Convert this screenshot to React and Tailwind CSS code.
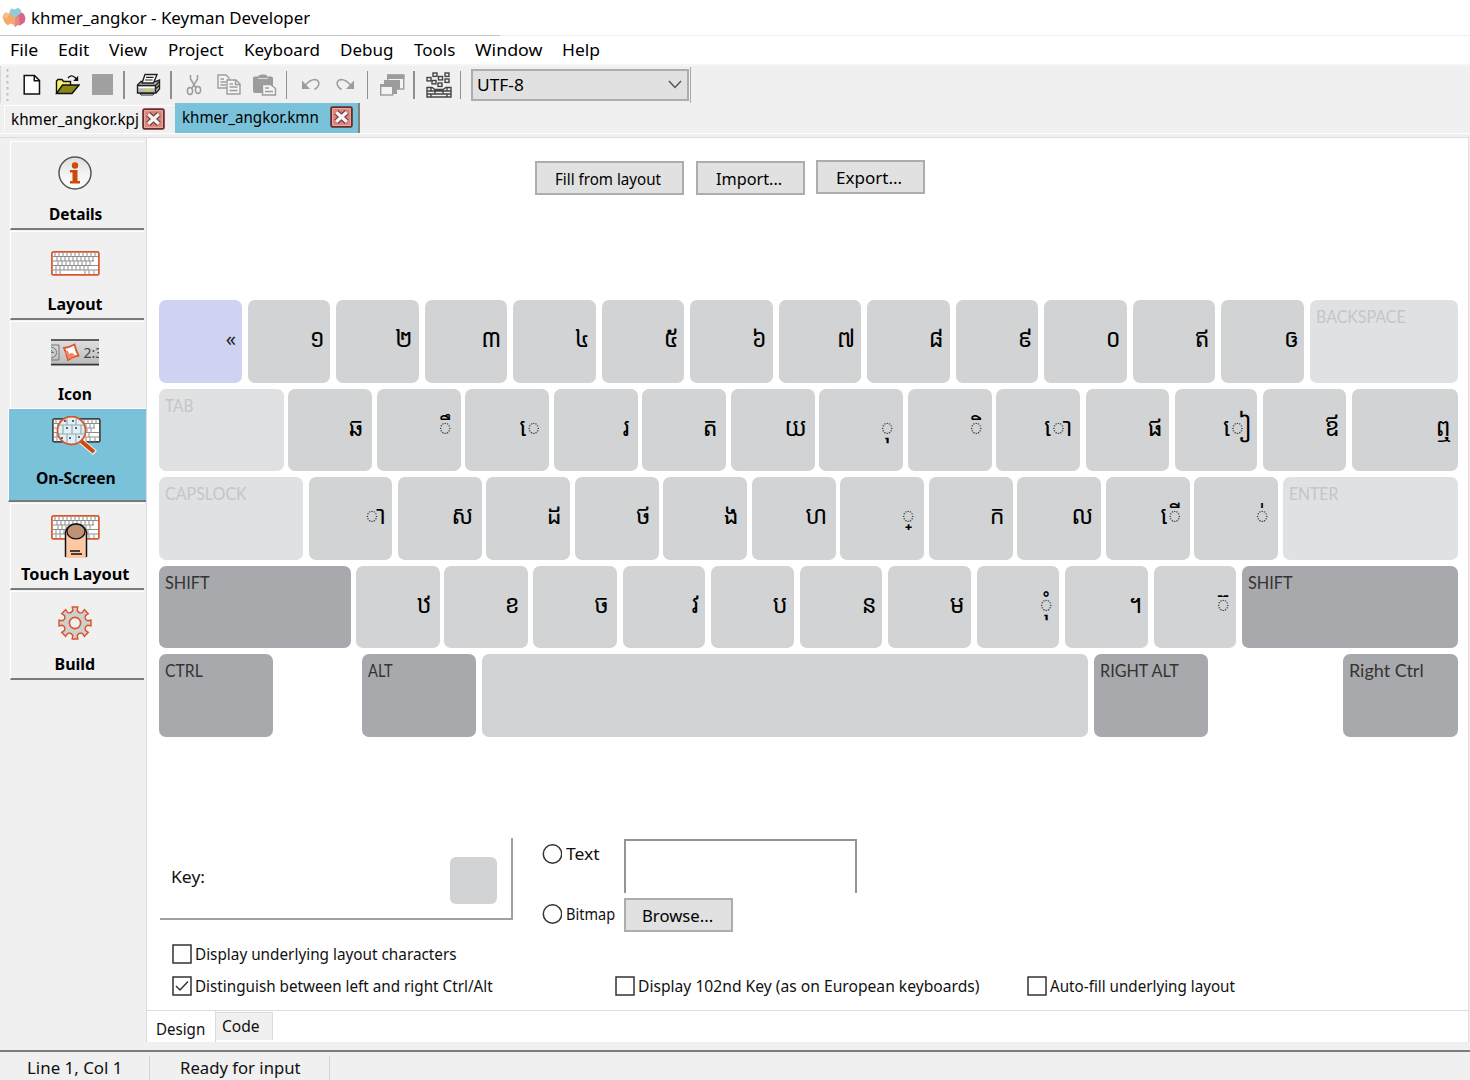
import { useLayoutEffect, useRef, useState } from "react";

/* Text squeezed or stretched horizontally to an exact width. */
function Fit({ w, className = "", children }) {
  const ref = useRef(null);
  const [scale, setScale] = useState(1);
  useLayoutEffect(() => {
    setScale(w / ref.current.offsetWidth);
  }, [w]);
  return (
    <span className="block shrink-0" style={{ width: w }}>
      <span
        ref={ref}
        className={"inline-block origin-left whitespace-nowrap " + className}
        style={{ transform: `scaleX(${scale})` }}
      >
        {children}
      </span>
    </span>
  );
}

const menus = [
  ["File", 28, 0],
  ["Edit", 31, 20],
  ["View", 38, 20],
  ["Project", 56, 21],
  ["Keyboard", 76, 20],
  ["Debug", 53, 20],
  ["Tools", 41, 21],
  ["Window", 67, 20],
  ["Help", 38, 20],
];

function Logo() {
  return (
    <svg className="block" width="26" height="22" viewBox="0 0 26 22">
      <path d="M7.500 5 L9 1.500 L13 2.500 L16 0.800 L19 3 L19.500 7 L13 11 L8 8.500Z" fill="#8fcbd9" />
      <path d="M0.500 10 L3 5.500 L8 6.500 L13 11 L12.500 18 L8 16.500 L6 18.500 L2.500 15.500Z" fill="#f6a869" />
      <path d="M13 11 L19.500 5.500 L22 7 L23.500 11 L22.500 15.500 L18 18.500 L15 17.500 L12.500 20Z" fill="#d9668a" />
      <path d="M13 11 L17 8.500 L17.500 17.500 L12.500 20Z" fill="#e98a78" />
      <path d="M0.500 10 L3 5.500 L7.500 7 L5 11.500Z" fill="#f3c08a" />
    </svg>
  );
}

function CloseBox() {
  return (
    <svg className="block shrink-0" width="23" height="22" viewBox="0 0 24 23">
      <rect x="1.2" y="1.2" width="21.6" height="20.6" rx="1.5" fill="#d98379" stroke="#6b2a2c" strokeWidth="2" />
      <rect x="2.8" y="2.8" width="18.4" height="17.4" fill="none" stroke="#e8b5ad" strokeWidth="1" />
      <path d="M6.500 6.500 L17.500 16.500 M17.500 6.500 L6.500 16.500" stroke="#7a3a3c" strokeWidth="6" />
      <path d="M6.500 6.500 L17.500 16.500 M17.500 6.500 L6.500 16.500" stroke="#f4f4f4" strokeWidth="3.400" />
    </svg>
  );
}

function NewIcon() {
  return (
    <svg className="block" width="20" height="22" viewBox="0 0 20 22">
      <path d="M2.2 1.5 H12.5 L17.5 6.5 V20 H2.2Z" fill="#fff" stroke="#111" strokeWidth="1.5" />
      <path d="M12.3 1.5 V6.8 H17.5" fill="none" stroke="#111" strokeWidth="1.5" />
    </svg>
  );
}
function OpenIcon() {
  return (
    <svg className="block" width="25" height="22" viewBox="0 0 25 22">
      <path d="M1.500 19 V7 L3 5.500 H7 L8.500 7.500 H15.500 V11" fill="#f7f46a" stroke="#111" strokeWidth="1.4" />
      <path d="M1.500 19.500 L7.500 11 H24 L17 19.500Z" fill="#8a8718" stroke="#111" strokeWidth="1.4" />
      <path d="M13 4 Q16 0 20 3.500 L22 5.500" fill="none" stroke="#111" strokeWidth="1.4" />
      <path d="M23.200 1.800 V7 H18.200Z" fill="#111" />
    </svg>
  );
}
function PrintIcon() {
  return (
    <svg className="block" width="25" height="23" viewBox="0 0 25 23">
      <path d="M1.5 12 L5 8.5 H20 L23.5 7 V16 L20 20 H1.5Z" fill="#b9b9b4" stroke="#222" strokeWidth="1.4" />
      <path d="M6 10 L9 1.5 H21 L17.5 10Z" fill="#fff" stroke="#222" strokeWidth="1.4" />
      <path d="M10 4.3 H17.5 M9 7 H16.5" stroke="#222" strokeWidth="1.2" />
      <path d="M1.5 12.5 H19.5 V20 M19.5 12.5 L23.5 8.5 M19.5 16 L23 12.5" fill="none" stroke="#222" strokeWidth="1.4" />
      <path d="M2.5 14.5 H18.5" stroke="#fff" strokeWidth="1.5" />
      <path d="M10 17 H15" stroke="#d9d432" strokeWidth="2" />
      <path d="M4 20.5 H18 L17 22 H5Z" fill="#fff" stroke="#222" strokeWidth="1" />
    </svg>
  );
}
function CutIcon() {
  return (
    <svg className="block" width="16" height="22" viewBox="0 0 16 22" fill="none" stroke="#9c9c9c" strokeWidth="1.500">
      <path d="M4.500 1 V5 L10 14 M11.500 1 V5 L6 14" />
      <ellipse cx="4" cy="17" rx="2.6" ry="3.4" />
      <ellipse cx="12" cy="16" rx="2.6" ry="3.4" />
    </svg>
  );
}
function CopyIcon() {
  return (
    <svg className="block" width="24" height="21" viewBox="0 0 24 21" fill="#f4f4f4" stroke="#9c9c9c" strokeWidth="1.4">
      <path d="M1 1 H9 L12 4 V14 H1Z" />
      <path d="M3.5 5 H7 M3.5 8 H9 M3.5 11 H9" />
      <path d="M10 6 H19 L23 10 V20 H10Z" />
      <path d="M18.5 6 V10.5 H23 M12.5 10 H16 M12.5 13 H20.5 M12.5 16.5 H20.5" fill="none" />
    </svg>
  );
}
function PasteIcon() {
  return (
    <svg className="block" width="25" height="22" viewBox="0 0 25 22">
      <path d="M1 4 Q1 2.5 2.5 2.5 H6 Q7.5 0 11 0.5 Q14.500 0 15.500 2.500 H19 Q21 2.500 21 4 V18 Q21 19 19 19 H3 Q1 19 1 17Z" fill="#9c9c9c" />
      <path d="M6 4.500 H16" stroke="#d8d8d8" strokeWidth="1.200" />
      <path d="M10.500 10.500 H18.500 L23.500 14.500 V21 H10.500Z" fill="#f4f4f4" stroke="#9c9c9c" strokeWidth="1.400" />
      <path d="M13 14 H17 M13 17.500 H21" stroke="#9c9c9c" strokeWidth="1.400" />
    </svg>
  );
}
function UndoIcon({ flip }) {
  return (
    <svg className={flip ? "block -scale-x-100" : "block"} width="20" height="14" viewBox="0 0 20 14">
      <path d="M1 2.500 V11 H9Z" fill="#9c9c9c" />
      <path d="M4 7.500 Q9 1.500 14 1.500 Q18.500 2.500 17.800 6.500 Q17 9.500 13.500 11.500" fill="none" stroke="#9c9c9c" strokeWidth="1.500" />
    </svg>
  );
}
function WindowsIcon() {
  return (
    <svg className="block" width="25" height="22" viewBox="0 0 25 22">
      <rect x="7.700" y="1" width="16" height="14" fill="#f4f4f4" stroke="#9c9c9c" strokeWidth="1.400" />
      <path d="M7 0.500 H24.500 V5 H7Z M4 6 H20 V15 H4Z" fill="#9c9c9c" />
      <rect x="0.700" y="11" width="12" height="10" fill="#f4f4f4" stroke="#9c9c9c" strokeWidth="1.400" />
      <path d="M0 10 H13 V13 H0Z M13 15 H17 V20 H13Z" fill="#9c9c9c" />
    </svg>
  );
}
function KeysIcon() {
  const loose = [[7, 1], [19, 1], [1, 5.500], [12.500, 4.500], [6, 8.500], [19, 7], [12, 11]];
  return (
    <svg className="block" width="26" height="26" viewBox="0 0 26 26" fill="none" stroke="#444" strokeWidth="1.400">
      {loose.map(([x, y]) => (
        <rect key={x + "-" + y} x={x} y={y} width="4" height="3.400" />
      ))}
      <path d="M1 15.500 H6 L9 17.500 H17 L20 15.500 H25 V25 H1Z M1 19 H25 M1 22 H25" />
      <path d="M5 15.500 V19 M9 18 V22 M13 17.500 V19 M17 19 V22 M21 15.500 V19 M5 22 V25 M21 22 V25" />
    </svg>
  );
}

function Divider() {
  return <div className="h-[28px] w-[1.500px] shrink-0 bg-[#8f8f8f]" />;
}

function Toolbar() {
  return (
    <div className="flex h-[37px] items-center border-l border-[#d8d8d8]">
      <svg className="ml-[5px] block" width="4" height="32" viewBox="0 0 4 32">
        {[1, 7, 13, 19, 25, 31].map((y) => (
          <rect key={y} x="0.500" y={y - 1} width="2" height="2.500" fill="#bdbdbd" />
        ))}
      </svg>
      <div className="ml-[12px]"><NewIcon /></div>
      <div className="ml-[13px]"><OpenIcon /></div>
      <div className="ml-[12px] h-[21px] w-[21px] bg-[#a0a0a0]" />
      <div className="ml-[10px]"><Divider /></div>
      <div className="ml-[11.500px]"><PrintIcon /></div>
      <div className="ml-[9px]"><Divider /></div>
      <div className="ml-[14.500px]"><CutIcon /></div>
      <div className="ml-[15px]"><CopyIcon /></div>
      <div className="ml-[10.500px]"><PasteIcon /></div>
      <div className="ml-[9px]"><Divider /></div>
      <div className="ml-[14px]"><UndoIcon /></div>
      <div className="ml-[14px]"><UndoIcon flip /></div>
      <div className="ml-[11.500px]"><Divider /></div>
      <div className="ml-[11.500px]"><WindowsIcon /></div>
      <div className="ml-[8.500px]"><Divider /></div>
      <div className="ml-[11px]"><KeysIcon /></div>
      <div className="ml-[8px]"><Divider /></div>
      <div className="ml-[10px] flex h-[32px] w-[218px] items-center justify-between border-2 border-[#adadad] bg-[#e1e1e1] pl-[4px] pr-[5px]">
        <Fit w={47} className="text-[17px] text-black">UTF-8</Fit>
        <svg width="14" height="9" viewBox="0 0 14 9" fill="none" stroke="#555" strokeWidth="1.500">
          <path d="M1 1 L7 7.500 L13 1" />
        </svg>
      </div>
      <div className="ml-px h-[36px] w-px bg-[#a8a8a8]" />
    </div>
  );
}

function KeyboardArt({ color = "#d8552b" }) {
  const rows = [
    [4, 8, 12, 16, 20, 24, 28, 32, 36, 40, 44],
    [6, 10, 14, 18, 22, 26, 30, 34, 38, 42],
    [7, 11, 15, 19, 23, 27, 31, 35, 39],
    [5, 9, 13, 17, 21, 25, 29, 33, 37],
    [5, 9, 34, 38, 43],
  ];
  return (
    <g>
      <rect x="0.900" y="0.900" width="47" height="23" rx="1.500" fill="#fff" stroke={color} strokeWidth="1.700" />
      <path d="M2 5.500 H47 M2 10 H43 M2 14.500 H47 M2 19 H47" stroke="#8c8c8c" strokeWidth="1" />
      {rows.map((xs, r) => (
        <path key={r} d={xs.map((x) => `M${x} ${1.500 + r * 4.500} v4`).join(" ")} stroke="#8c8c8c" strokeWidth="1" />
      ))}
    </g>
  );
}

function DetailsArt() {
  return (
    <svg className="block" width="36" height="36" viewBox="0 0 36 36">
      <defs>
        <linearGradient id="disc" x1="0" y1="0" x2="0" y2="1">
          <stop offset="0" stopColor="#dedede" />
          <stop offset="0.500" stopColor="#f2f2f2" />
          <stop offset="1" stopColor="#fff" />
        </linearGradient>
      </defs>
      <circle cx="18" cy="18" r="16" fill="url(#disc)" stroke="#555" strokeWidth="1.500" />
      <circle cx="18" cy="10.500" r="3.200" fill="#cc4a0c" />
      <path d="M13 15 H20.500 V26 H23 V28.500 H13 V26 H15.500 V17.500 H13Z" fill="#cc4a0c" />
    </svg>
  );
}
function LayoutArt() {
  return <svg className="block" width="49" height="25" viewBox="0 0 49 25"><KeyboardArt /></svg>;
}
function TrayArt() {
  return (
    <svg className="block" width="48" height="27" viewBox="0 0 48 27">
      <defs>
        <linearGradient id="tray" x1="0" y1="0" x2="0" y2="1">
          <stop offset="0" stopColor="#e0e0e0" />
          <stop offset="1" stopColor="#b9b9b9" />
        </linearGradient>
      </defs>
      <rect width="48" height="27" fill="url(#tray)" />
      <path d="M0 1 H48 M0 25.500 H48" stroke="#333" strokeWidth="1.500" />
      <path d="M0 6 H8 V21 H0" fill="none" stroke="#777" />
      <path d="M0 8 Q5.500 9 5.500 13.500 Q5.500 18 0 19 M0 13.500 H3 M0 11 L2 13" fill="none" stroke="#777" />
      <path d="M13 9 Q18 8.500 23.500 5.500 Q25 12 27.500 16.500 Q22 17.500 17 21 Q15.500 14 13 9Z" fill="#fff" stroke="#e0562b" strokeWidth="1.800" />
      <path d="M14.500 13 Q17 9 18 15 Q22 12 24 17 L18 20Z" fill="#ee8a66" />
      <text x="32.500" y="18.500" className="font-['Noto_Sans'] text-[14px]" fill="#444">2:3</text>
    </svg>
  );
}
function OnScreenArt() {
  return (
    <svg className="block" width="49" height="40" viewBox="0 0 49 40">
      <g transform="translate(0 2)"><KeyboardArt color="#444" /></g>
      <path d="M29 25 L43 37" stroke="#eee" strokeWidth="6" />
      <path d="M29 25 L42 36" stroke="#cc4a0c" strokeWidth="4" />
      <circle cx="19.500" cy="14.500" r="14" fill="#dff1f7" stroke="#d8552b" strokeWidth="1.800" />
      <path d="M7 9 H32 M6 18 H33 M15 3 V9 M24 3 V9 M11 9 V18 M20 9 V18 M29 9 V18 M15 18 V27 M24 18 V27" stroke="#9aa" strokeWidth="1.200" fill="none" />
      <path d="M13 6 v-2 M21 6 v-2 M15 13 v-2 M24 13 v-2 M10 23 v-2 M18 23 v-2 M27 22 v-2" stroke="#334" strokeWidth="1.500" />
    </svg>
  );
}
function TouchArt() {
  return (
    <svg className="block" width="49" height="43" viewBox="0 0 49 43">
      <KeyboardArt />
      <path d="M14.500 43 V17 Q17 9 25 9 Q33 9 35.500 17 V43Z" fill="#fcc9a4" />
      <path d="M14.500 42 V17 Q17 9 25 9 Q33 9 35.500 17 V42" fill="none" stroke="#111" strokeWidth="1.500" />
      <ellipse cx="25" cy="16.500" rx="9" ry="7.300" fill="#bd9275" stroke="#111" strokeWidth="1.300" />
      <path d="M19 36 H29 M20 39 H31" stroke="#111" strokeWidth="1.400" />
    </svg>
  );
}
function BuildArt() {
  const teeth = [0, 45, 90, 135, 180, 225, 270, 315];
  return (
    <svg className="block" width="36" height="36" viewBox="-18 -18 36 36">
      <circle r="11.200" fill="#cfcfcf" stroke="#d8552b" strokeWidth="1.400" />
      <g fill="#cfcfcf" stroke="#d8552b" strokeWidth="1.400">
        {teeth.map((a) => (
          <path key={a} transform={`rotate(${a})`} d="M-4.200 -10 L-2.200 -12.500 L-2.800 -16 H2.800 L2.200 -12.500 L4.200 -10" />
        ))}
      </g>
      <circle r="10.500" fill="#cfcfcf" />
      <circle r="5.600" fill="#efefef" stroke="#d8552b" strokeWidth="1.600" />
    </svg>
  );
}

function SideItem({ art, label, w, selected, className }) {
  return (
    <div
      className={
        "flex flex-col items-center border-l border-t border-l-white border-t-white border-b-[#7a7a7a] " +
        (selected ? "ml-[8px] w-[138px] bg-[#7ac2da] pr-[3px] " : "ml-[10px] w-[134px] pr-[5px] ") +
        className
      }
    >
      {art}
      <div className="mt-auto">
        <Fit w={w} className="text-[16px] font-bold leading-[24px] text-black">{label}</Fit>
      </div>
    </div>
  );
}

const N = "n";
const D = "d";
const L = "l";
/* Each key: left edge, right edge, label, kind, label width. */
const keyRows = [
  [
    [159, 241.5, "«", "sel"], [247.5, 330, "១", N], [336, 418.5, "២", N], [424.5, 507, "៣", N],
    [513, 595.5, "៤", N], [601.5, 684, "៥", N], [690, 772.5, "៦", N], [778.5, 861, "៧", N],
    [867, 949.5, "៨", N], [955.5, 1038, "៩", N], [1044, 1126.5, "០", N], [1132.5, 1215, "ឥ", N],
    [1221, 1303.5, "ឲ", N], [1309.5, 1458, "BACKSPACE", L, 90],
  ],
  [
    [159, 283.5, "TAB", L, 28], [288, 372, "ឆ", N], [376.5, 460.5, "◌ឹ", N], [465, 549, "◌េ", N],
    [553.5, 637.5, "រ", N], [642, 726, "ត", N], [730.5, 814.5, "យ", N], [819, 903, "◌ុ", N],
    [907.5, 991.5, "◌ិ", N], [996, 1080, "◌ោ", N], [1086, 1168.5, "ផ", N], [1174.5, 1257, "◌ៀ", N],
    [1263, 1345.5, "ឪ", N], [1351.5, 1458, "ឮ", N],
  ],
  [
    [159, 302.5, "CAPSLOCK", L, 82], [309, 391.5, "◌ា", N], [397.5, 481.5, "ស", N], [486, 570, "ដ", N],
    [574.5, 658.5, "ថ", N], [663, 747, "ង", N], [751.5, 835.5, "ហ", N], [840, 924, "◌្", N],
    [928.5, 1012.5, "ក", N], [1017, 1101, "ល", N], [1105.5, 1189.5, "◌ើ", N], [1194, 1278, "◌់", N],
    [1282.5, 1458, "ENTER", L, 49],
  ],
  [
    [159, 351, "SHIFT", D, 45], [355.5, 439.5, "ឋ", N], [444, 528, "ខ", N], [532.5, 616.5, "ច", N],
    [622.5, 705, "វ", N], [711, 793.5, "ប", N], [799.5, 882, "ន", N], [888, 970.5, "ម", N],
    [976.5, 1059, "◌ុំ", N], [1065, 1147.5, "។", N], [1153.5, 1236, "◌៊", N], [1242, 1458, "SHIFT", D, 45],
  ],
  [
    [159, 273, "CTRL", D, 38], [361.5, 475.5, "ALT", D, 25], [481.5, 1087.5, "", N],
    [1093.5, 1207.5, "RIGHT ALT", D, 79], [1342.5, 1458, "Right Ctrl", D, 75],
  ],
];

const keyLook = {
  sel: "bg-[#d0d2f1] justify-end pt-[27px] text-[#222]",
  n: "bg-[#d1d3d4] justify-end pt-[17px] text-black",
  l: "bg-[#e0e1e2] pl-[6px] pt-[5px] text-[#c4c6c8]",
  d: "bg-[#a7a9ac] pl-[6px] pt-[5px] text-[#333]",
};

function KeyCap({ k, gap }) {
  const [x0, x1, label, kind, w] = k;
  const width = x1 - x0;
  const pad = w ? "" : width === 84 ? " pr-[8px]" : " pr-[5.500px]";
  return (
    <div
      className={"flex h-[82.500px] shrink-0 items-start rounded-[7px] " + keyLook[kind] + pad}
      style={{ width, marginLeft: gap }}
    >
      {w ? (
        <Fit w={w} className="font-['Lato'] text-[17px] leading-[24px]">{label}</Fit>
      ) : kind === "sel" ? (
        <span className="text-[20px] leading-[24px]">{label}</span>
      ) : (
        <span className="origin-right scale-x-[0.9] whitespace-nowrap font-['Noto_Sans_Khmer','Noto_Sans','DejaVu_Sans',sans-serif] text-[26px] leading-[40px]">
          {label}
        </span>
      )}
    </div>
  );
}

function Button({ children, w, className }) {
  return (
    <div className={"flex h-[34px] items-center justify-center border-2 border-[#adadad] bg-[#e1e1e1] pr-[3px] pt-[1px] " + className}>
      <Fit w={w} className="text-[16px] text-black">{children}</Fit>
    </div>
  );
}

function Check({ checked, label, w, className = "" }) {
  return (
    <div className={"flex h-[20px] items-center " + className}>
      <svg className="block shrink-0" width="20" height="20" viewBox="0 0 20 20" fill="none" stroke="#333">
        <rect x="1" y="1" width="18" height="18" fill="#fff" strokeWidth="1.500" />
        {checked && <path d="M4 10 L8 14 L16 5.500" strokeWidth="1.500" />}
      </svg>
      <div className="ml-[3px]">
        <Fit w={w} className="text-[16px] leading-[20px]">{label}</Fit>
      </div>
    </div>
  );
}

function Radio({ label, w, className = "" }) {
  return (
    <div className={"flex h-[20px] items-center " + className}>
      <svg className="block shrink-0" width="20" height="20" viewBox="0 0 20 20">
        <circle cx="10.500" cy="10" r="9.200" fill="#fff" stroke="#333" strokeWidth="1.500" />
      </svg>
      <div className="ml-[4px]">
        <Fit w={w} className="text-[16px] leading-[20px]">{label}</Fit>
      </div>
    </div>
  );
}

export default function App() {
  return (
    <div className="flex h-[1080px] w-[1470px] flex-col overflow-hidden bg-[#f0f0f0] font-['Noto_Sans',sans-serif] text-[#111]">
      <div className="flex h-[35px] shrink-0 items-center bg-white pl-[2px] pt-[1px]">
        <Logo />
        <div className="ml-[3px]">
          <Fit w={279} className="text-[17px] text-black">khmer_angkor - Keyman Developer</Fit>
        </div>
      </div>
      <div className="h-px w-[500px] shrink-0 bg-[#c8c8c8]" />
      <div className="flex h-[28px] shrink-0 items-center bg-white pl-[10px]">
        {menus.map(([m, w, gap]) => (
          <div key={m} style={{ marginLeft: gap }}>
            <Fit w={w} className="text-[17px] text-black">{m}</Fit>
          </div>
        ))}
      </div>
      <div className="h-[2px] shrink-0 bg-[#f6f6f6]" />
      <Toolbar />
      <div className="flex h-[30px] shrink-0 items-start">
        <div className="ml-[4px] mt-[2px] flex h-[26px] w-[169px] items-center border-l border-t border-white pl-[6px]">
          <Fit w={128} className="text-[16px] text-black">khmer_angkor.kpj</Fit>
          <div className="ml-[3px]"><CloseBox /></div>
        </div>
        <div className="ml-[2px] flex h-[30px] w-[185px] items-center border-r-2 border-[#7f7f7f] bg-[#7ac2da] pb-[3px] pl-[7px]">
          <Fit w={137} className="text-[16px] text-black">khmer_angkor.kmn</Fit>
          <div className="ml-[11px]"><CloseBox /></div>
        </div>
      </div>
      <div className="h-[5px] shrink-0 border-b border-t border-b-[#dcdcdc] border-t-white" />
      <div className="flex h-[904px] shrink-0">
        <div className="flex w-[146px] shrink-0 flex-col">
          <SideItem art={<DetailsArt />} label="Details" w={53} className="mt-[3px] h-[89px] border-b-2 pb-[2px] pt-[13px]" />
          <SideItem art={<LayoutArt />} label="Layout" w={55} className="mt-[1px] h-[89px] border-b-2 pb-[2px] pt-[19px]" />
          <SideItem art={<TrayArt />} label="Icon" w={34} className="mt-[1px] h-[87px] pb-[2px] pt-[17px]" />
          <SideItem art={<OnScreenArt />} label="On-Screen" w={80} selected className="h-[94px] border-b-2 pb-[10px] pt-[7px]" />
          <SideItem art={<TouchArt />} label="Touch Layout" w={108} className="mt-[1px] h-[87px] border-b-2 pb-[2px] pt-[11px]" />
          <SideItem art={<BuildArt />} label="Build" w={41} className="mt-[1px] h-[89px] border-b-2 pb-[2px] pt-[13px]" />
        </div>
        <div className="flex w-[1323px] flex-col border-l border-r border-[#dcdcdc] bg-white">
          <div className="flex h-[162px] shrink-0 pl-[388px]">
            <Button w={106} className="mt-[23px] w-[149px]">Fill from layout</Button>
            <Button w={66} className="ml-[12px] mt-[23px] w-[109px]">Import...</Button>
            <Button w={66} className="ml-[11px] mt-[22px] w-[109px]">Export...</Button>
          </div>
          <div className="flex h-[438px] shrink-0 flex-col gap-[6px]">
            {keyRows.map((row, r) => (
              <div key={r} className="flex">
                {row.map((k, i) => (
                  <KeyCap key={i} k={k} gap={k[0] - (i ? row[i - 1][1] : 147)} />
                ))}
              </div>
            ))}
          </div>
          <div className="mt-[100px] flex h-[97px] shrink-0">
            <div className="ml-[13px] flex h-[82px] w-[353px] items-center border-b-2 border-r-2 border-[#a0a0a0] pl-[11px]">
              <div className="pb-[2px]">
                <Fit w={34} className="text-[16px]">Key:</Fit>
              </div>
              <div className="ml-[245px] mt-[4px] h-[47px] w-[47px] rounded-[6px] bg-[#d1d3d4]" />
            </div>
            <div className="ml-[29px] w-[82px] shrink-0">
              <Radio label="Text" w={34} className="mt-[6px]" />
              <Radio label="Bitmap" w={49} className="mt-[40px]" />
            </div>
            <div>
              <div className="mt-[1px] h-[54px] w-[233px] border-l-2 border-r-2 border-t-2 border-[#949494]" />
              <Button w={71} className="mt-[5px] w-[109px]">Browse...</Button>
            </div>
          </div>
          <div className="ml-[25px] mt-[9px] flex">
            <Check label="Display underlying layout characters" w={262} />
          </div>
          <div className="ml-[25px] mt-[12px] flex">
            <Check checked label="Distinguish between left and right Ctrl/Alt" w={298} />
            <Check label="Display 102nd Key (as on European keyboards)" w={341} className="ml-[122px]" />
            <Check label="Auto-fill underlying layout" w={185} className="ml-[48px]" />
          </div>
          <div className="mt-auto flex h-[32px] shrink-0 border-t border-[#dcdcdc]">
            <div className="flex w-[69px] items-center border-r border-[#dcdcdc] pl-[9px] pt-[4px]">
              <Fit w={49} className="text-[16px]">Design</Fit>
            </div>
            <div className="mt-[1px] flex h-[28px] w-[57px] items-center border-r border-t border-[#dcdcdc] bg-[#f0f0f0] pb-[2px] pl-[6px]">
              <Fit w={38} className="text-[16px]">Code</Fit>
            </div>
          </div>
        </div>
      </div>
      <div className="mt-[8px] h-[2px] shrink-0 bg-[#7d7d7d]" />
      <div className="flex flex-1 items-center pt-[4px]">
        <div className="flex h-full w-[150px] items-center border-r border-[#d4d4d4] pl-[27px]">
          <Fit w={95} className="text-[16px]">Line 1, Col 1</Fit>
        </div>
        <div className="flex h-full w-[180px] items-center border-r border-[#d4d4d4] pl-[30px]">
          <Fit w={121} className="text-[16px]">Ready for input</Fit>
        </div>
      </div>
    </div>
  );
}
